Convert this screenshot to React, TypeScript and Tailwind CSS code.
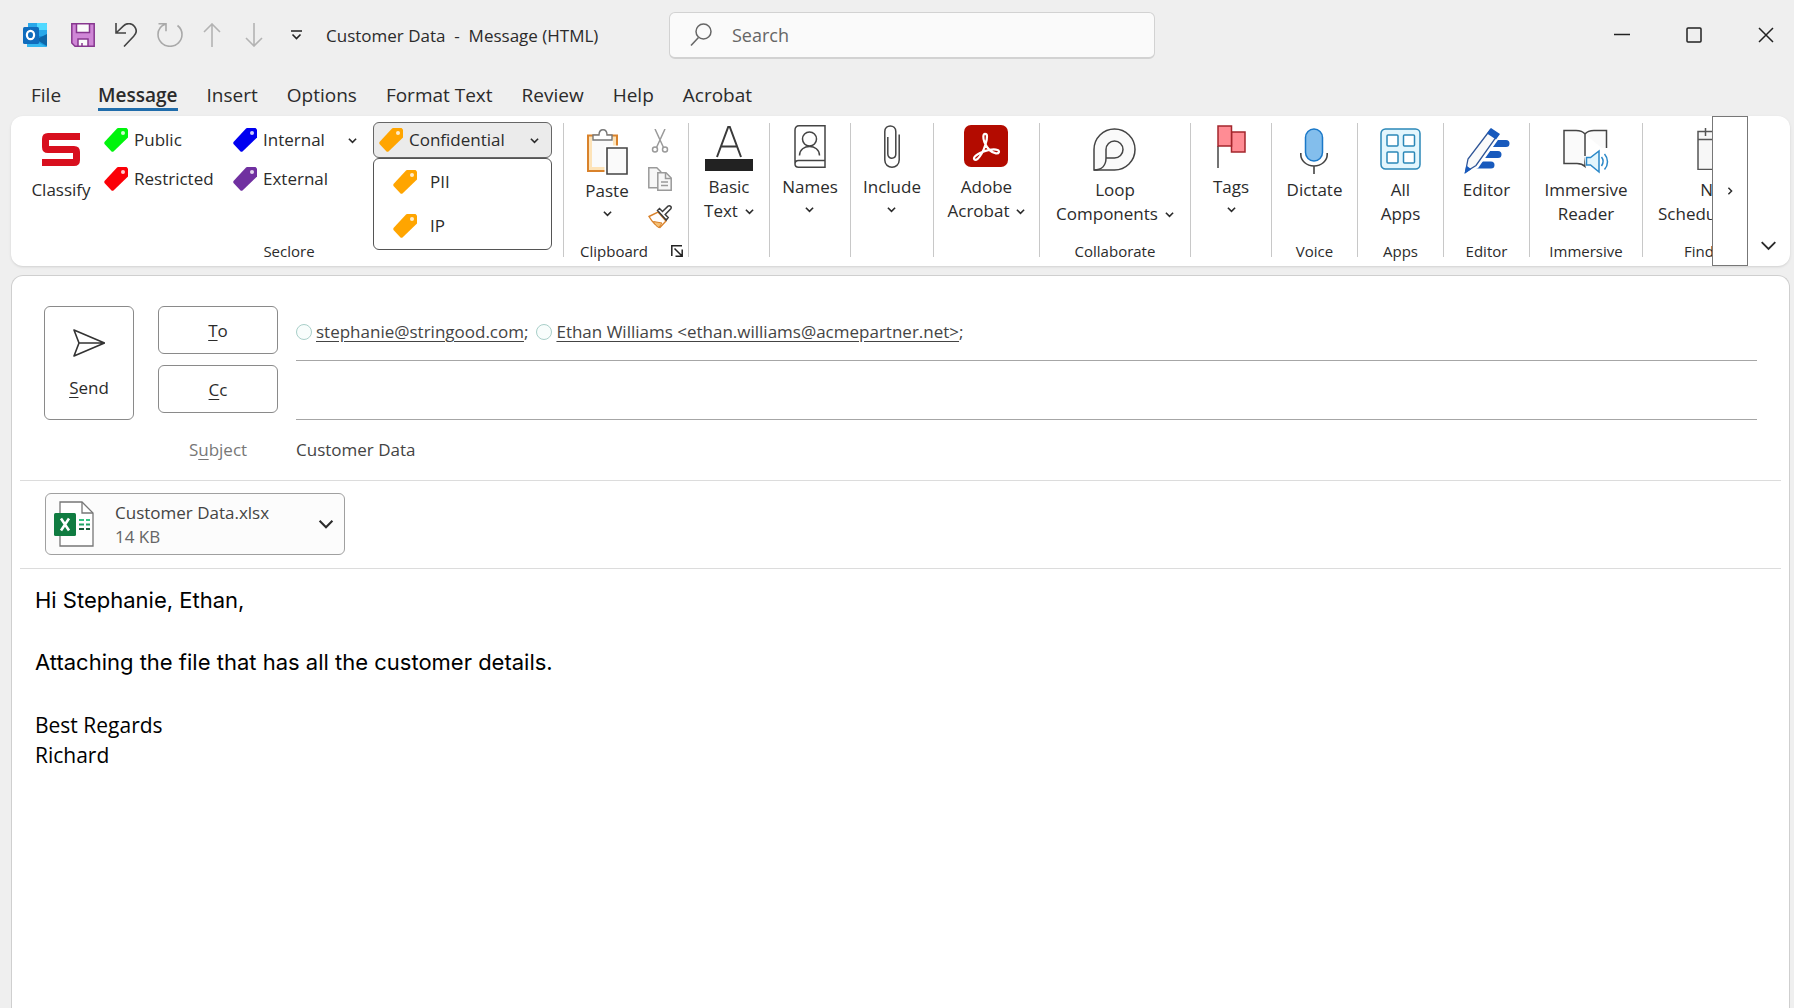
import type { ReactNode } from 'react';

interface TagButtonProps {
  color: string;
  label: string;
}

function Chevron({ className = 'w-[9px] h-[9px]', weight = 1.8 }: { className?: string; weight?: number }) {
  return (
    <svg className={`${className} shrink-0`} viewBox="0 0 10 10" fill="none" stroke="currentColor" strokeWidth={weight}>
      <path d="M1 3l4 4 4-4" />
    </svg>
  );
}

function TagIcon({ color }: { color: string }) {
  return (
    <svg className="w-6 h-6 shrink-0" viewBox="0 0 24 24">
      <path d="M14 0h8.5L24 1.5V9.500L9.500 23.500Q8.500 24 7.500 23.500L.5 16Q0 15 .5 14L13 .6z" fill={color} />
      <circle cx="19" cy="5" r="2" fill="#fff" fillOpacity=".8" />
    </svg>
  );
}

function TagButton({ color, label }: TagButtonProps) {
  return (
    <button className="flex h-6 items-center gap-[6px]">
      <TagIcon color={color} />
      {label}
    </button>
  );
}

function Divider() {
  return <div className="h-[134px] w-px shrink-0 bg-[#c8c8c8]" />;
}

interface GroupProps {
  width: string;
  label?: string;
  children: ReactNode;
}

function Group({ width, label, children }: GroupProps) {
  return (
    <div className={`${width} flex h-[138px] shrink-0 flex-col items-center justify-between`}>
      {children}
      {label && <div className="h-5 text-[15px] leading-5 whitespace-nowrap">{label}</div>}
    </div>
  );
}

interface BigButtonProps {
  icon: ReactNode;
  lines: string[];
  menu?: 'inline' | 'below';
  tall?: boolean;
}

function BigButton({ icon, lines, menu, tall }: BigButtonProps) {
  return (
    <button className="flex flex-col items-center leading-6">
      <span className={`flex items-start ${tall ? 'h-[55px] pt-[5px]' : 'h-[52px] pt-[2px]'}`}>{icon}</span>
      {lines.map((line, i) => (
        <span key={line} className="flex items-center gap-[7px] whitespace-nowrap">
          {line}
          {menu === 'inline' && i === lines.length - 1 && <Chevron />}
        </span>
      ))}
      {menu === 'below' && (
        <span className="flex h-5 items-center">
          <Chevron />
        </span>
      )}
    </button>
  );
}

function OutlookIcon() {
  return (
    <svg className="w-6 h-6" viewBox="0 0 24 24">
      <rect x="5" y="0" width="19" height="20" rx="1" fill="#1490df" />
      <path d="M14 0h9a1 1 0 0 1 1 1v6H14z" fill="#50d9ff" />
      <path d="M5 1a1 1 0 0 1 1-1h8v7H5z" fill="#28a8ea" />
      <path d="M14 7h10v6H14z" fill="#28a8ea" />
      <path d="M4 12l10 5 10-6v12a1 1 0 0 1-1 1H5a1 1 0 0 1-1-1z" fill="#1a9be0" />
      <path d="M24 11v12L13 16.500z" fill="#0a4f8f" fillOpacity=".7" />
      <path d="M4 14l20 10H5a1 1 0 0 1-1-1z" fill="#35b8f1" />
      <rect x="0" y="4" width="16" height="17" rx="1.500" fill="#0f6cbd" />
      <ellipse cx="7.500" cy="12" rx="3.600" ry="4.200" fill="none" stroke="#fff" strokeWidth="2.200" />
    </svg>
  );
}

function SaveIcon() {
  return (
    <svg className="w-6 h-6" viewBox="0 0 24 24" stroke="#87378f" strokeWidth="1.500">
      <path d="M.8.8h22.400v22.400H4L.8 20z" fill="#cf86d6" />
      <path d="M5.500.8h13v8.700h-13z" fill="#fafafa" />
      <path d="M7 23.200v-7.200h10v7.200z" fill="#fafafa" />
      <path d="M11 20v3" />
    </svg>
  );
}

function UndoIcon() {
  return (
    <svg className="w-[22px] h-6" viewBox="0 0 22 24" fill="none" stroke="#444" strokeWidth="1.600">
      <path d="M1 0v10h10M1 10L8.500 2.800c3.600-3.400 8.600-2.600 11 .6s2 7-.8 9.800L9 23.500" />
    </svg>
  );
}

function RedoIcon() {
  return (
    <svg className="w-[26px] h-6" viewBox="0 0 26 24" fill="none" stroke="#a9a9a9" strokeWidth="1.600">
      <path d="M1.500.8h7.500v7.500M8.800 1C4 2.600 1 6.700 1 11.500a12 11.800 0 0 0 24 0C25 8 23.200 4.600 20.500 2.500" />
    </svg>
  );
}

function ArrowIcon({ down }: { down?: boolean }) {
  return (
    <svg className={`w-[18px] h-6 ${down ? 'rotate-180' : ''}`} viewBox="0 0 18 24" fill="none" stroke="#b3b3b3" strokeWidth="1.600">
      <path d="M9 24V1M1 9l8-8 8 8" />
    </svg>
  );
}

function PasteIcon() {
  return (
    <svg className="w-[42px] h-[46px]" viewBox="0 0 42 46">
      <path d="M2 6.500h29V42H2z" fill="#fde3b8" stroke="#d9822b" strokeWidth="2" />
      <path d="M6 10h21v28H6z" fill="#fafafa" />
      <path d="M7 11V6h6c0-7 8-7 8 0h5v5z" fill="#fff" stroke="#777" strokeWidth="1.400" />
      <path d="M18.500 16.500h24V46h-24z" fill="#fff" />
      <path d="M21 19h20v26H21z" fill="#fafafa" stroke="#444" strokeWidth="1.600" />
    </svg>
  );
}

function CutIcon() {
  return (
    <svg className="w-[18px] h-6" viewBox="0 0 18 24" fill="none" stroke="#9a9a9a" strokeWidth="1.500">
      <path d="M4 0l8.500 18.500M14 0L5.500 18.500" />
      <circle cx="4" cy="20.500" r="2.500" />
      <circle cx="14" cy="20.500" r="2.500" />
    </svg>
  );
}

function CopyIcon() {
  return (
    <svg className="w-6 h-6" viewBox="0 0 24 24" fill="#f7f7f7" stroke="#9a9a9a" strokeWidth="1.500">
      <path d="M.8.8h8l4 4v16H.8z" />
      <path d="M9.800 5.800H18l5.200 5.200v12.200H9.800z" />
      <path d="M17.500 6v5.500H23M13 15h7M13 18.500h7" fill="none" />
    </svg>
  );
}

function FormatPainterIcon() {
  return (
    <svg className="w-6 h-6" viewBox="0 0 24 24">
      <path d="M1 11.500l9-4.500 8 9-6 6.500C8 21 4 16.500 1 11.500z" fill="#fff" stroke="#d9822b" strokeWidth="1.400" />
      <path d="M5.500 16.500l8.500 1.500-3 4.500c-2.500-1-4.500-3.500-5.500-6z" fill="#f5bf73" stroke="#d9822b" />
      <path d="M9.500 5.500l2-2 3 3L20 1.200c2-1.200 4 .8 2.800 2.600L17.200 9.500l3 3-2 2.500z" fill="#fff" stroke="#3c3c3c" strokeWidth="1.500" />
    </svg>
  );
}

function LauncherIcon() {
  return (
    <svg className="w-3 h-3" viewBox="0 0 12 12" fill="none" stroke="#222" strokeWidth="1.500">
      <path d="M.8 11V.8H11M3.500 3.500l7 7M11.200 4.500v6.700H4.500" />
    </svg>
  );
}

function BasicTextIcon() {
  return (
    <svg className="w-12 h-[46px]" viewBox="0 0 48 46">
      <path d="M12 32L23.200 2h1.600L36 32M16 21.500h16" fill="none" stroke="#3a3a3a" strokeWidth="2" />
      <path d="M0 34h48v12H0z" fill="#222" />
    </svg>
  );
}

function NamesIcon() {
  return (
    <svg className="w-8 h-[43px]" viewBox="0 0 32 43" fill="none" stroke="#444" strokeWidth="1.500">
      <path d="M31 .8v41.400H4.500C2.500 42.200 1 41 1 39V5C1 2.500 2.500.8 5 .8zM31 35.500H4.500C2.500 35.500 1 37 1 39" />
      <circle cx="15.500" cy="14" r="7" />
      <path d="M5.500 30.500c0-12 20-12 20 0" />
    </svg>
  );
}

function ClipIcon() {
  return (
    <svg className="w-4 h-[43px]" viewBox="0 0 16 43" fill="none" stroke="#444" strokeWidth="1.500">
      <path d="M15.200 9.500V35c0 9.600-14.400 9.600-14.400 0V6.500C.8-1 11.800-1 11.800 6.500V29c0 5.500-8 5.500-8 0V12" />
    </svg>
  );
}

function AdobeIcon() {
  return (
    <svg className="w-11 h-[42px]" viewBox="0 0 44 42">
      <rect width="44" height="42" rx="7" fill="#b30b00" />
      <path
        d="M21 8.800c-2 0-2.200 4-.6 8.200 2.600 6.500 7.200 10.500 11.500 11.300 3.200.5 4.200-2.300 1.600-3.300-4-1.600-12.500.3-18.500 3.500-4 2-5.800 4.600-4.600 5.900 1.600 1.600 4.600-1.200 7.300-5.900 3-5.200 5.500-13.500 5.300-17.500-.1-1.600-1-2.200-2-2.200z"
        fill="none"
        stroke="#fff"
        strokeWidth="2.200"
      />
    </svg>
  );
}

function LoopIcon() {
  return (
    <svg className="w-[43px] h-[43px]" viewBox="0 0 43 43" fill="none" stroke="#444" strokeWidth="1.500">
      <path d="M1 42V21.500A20.500 20.500 0 1 1 21.500 42z" fill="#fafafa" />
      <path d="M1 42c8 0 12-5 12-12v-8.500a8.500 8.500 0 1 1 8.500 8.500H13" />
    </svg>
  );
}

function FlagIcon() {
  return (
    <svg className="w-[30px] h-[43px]" viewBox="0 0 30 43">
      <path d="M2 21v22" stroke="#444" strokeWidth="1.500" />
      <path d="M15.500 7H29v20H15.500z" fill="#ff8c94" stroke="#a4262c" strokeWidth="1.500" />
      <path d="M2 1h13.500v20H2z" fill="#ff8c94" stroke="#a4262c" strokeWidth="1.500" />
    </svg>
  );
}

function MicIcon() {
  return (
    <svg className="w-7 h-[46px]" viewBox="0 0 28 46" fill="none">
      <path d="M.8 25v1.500c0 6 5.500 11.500 13.200 11.500s13.200-5.500 13.200-11.500V25M14 38v8" stroke="#444" strokeWidth="1.600" />
      <rect x="5.500" y="1" width="17" height="32" rx="8.500" fill="#83beec" stroke="#1a78c8" strokeWidth="1.500" />
    </svg>
  );
}

function AppsIcon() {
  return (
    <svg className="w-[41px] h-[42px]" viewBox="0 0 41 42" fill="#fff" stroke="#2b88b8" strokeWidth="1.500">
      <rect x="1" y="1" width="39" height="40" rx="4.500" fill="#e3f6fd" />
      <rect x="7" y="7" width="11" height="11" rx="1" />
      <rect x="23.500" y="7" width="11" height="11" rx="1" />
      <rect x="7" y="24" width="11" height="11" rx="1" />
      <rect x="23.500" y="24" width="11" height="11" rx="1" />
    </svg>
  );
}

function EditorIcon() {
  return (
    <svg className="w-[46px] h-[46px]" viewBox="0 0 46 46">
      <path d="M24 15.500h18M18 26.500h16M14 37h13" stroke="#185abd" strokeWidth="7" strokeLinecap="round" />
      <path d="M1 43l3-13L27 2l8 5.500-22 31z" fill="#fff" stroke="#fff" strokeWidth="3.500" />
      <path d="M1.500 44l2.500-13L26.500 1.500l7.500 5L12 37.500z" fill="#fafafa" stroke="#2f5597" strokeWidth="1.300" />
      <path d="M27 0l9 6-4 5.500-9-6zM.5 46l1.800-8.500 5 3.700z" fill="#185abd" />
    </svg>
  );
}

function ReaderIcon() {
  return (
    <svg className="w-[47px] h-[46px]" viewBox="0 0 47 46" fill="none" strokeWidth="1.500">
      <path d="M22 6C20 3.500 17 2.500 13 2.500H1V35.500h13c4 0 6 1 8 3V6c2-2.500 5-3.500 9-3.500h12.500V24" stroke="#444" fill="#fafafa" />
      <path d="M21 28h9l6-8h11v26H24z" fill="#fff" />
      <path d="M23.500 29.500h4L36 23v21l-8.500-7h-4z" stroke="#2b88c8" fill="#e3f6fd" />
      <path d="M38.500 29c2 2.500 2 6 0 9M41.500 26c4 4.500 4 11 0 15.500" stroke="#2b88c8" />
    </svg>
  );
}

function CalendarIcon() {
  return (
    <svg className="w-[42px] h-[42px]" viewBox="0 0 42 42" fill="none" stroke="#555" strokeWidth="1.500">
      <path d="M1 3.500h40v38H1z" fill="#f7f7f7" />
      <path d="M1 11.500h40M8.500 0v8M33.500 0v8" />
    </svg>
  );
}

function SendIcon() {
  return (
    <svg className="w-8 h-7" viewBox="0 0 32 28" fill="none" stroke="#333" strokeWidth="1.600" strokeLinejoin="round">
      <path d="M1 1l30.500 13L1 27l5-13zM6 14h25" />
    </svg>
  );
}

function ExcelFileIcon() {
  return (
    <svg className="w-10 h-[46px]" viewBox="0 0 40 46">
      <path d="M6 1h22l11 11v33H6z" fill="#fff" stroke="#777" strokeWidth="1.300" />
      <path d="M28 1v11h11" fill="none" stroke="#777" strokeWidth="1.300" />
      <path d="M25 19h5M32 19h4" stroke="#33c481" strokeWidth="2" />
      <path d="M25 23.500h5M32 23.500h4" stroke="#21a366" strokeWidth="2" />
      <path d="M25 28h5M32 28h4" stroke="#185c37" strokeWidth="2" />
      <rect y="12" width="22" height="23" rx="1.500" fill="#107c41" />
      <path d="M7 17.500l8 12M15 17.500l-8 12" stroke="#fff" strokeWidth="2.600" />
    </svg>
  );
}

function TitleBar() {
  return (
    <header className="flex h-[70px] items-center">
      <div className="flex w-[669px] shrink-0 items-center pl-[23px]">
        <OutlookIcon />
        <div className="ml-6 flex items-center gap-5">
          <button aria-label="Save"><SaveIcon /></button>
          <button aria-label="Undo"><UndoIcon /></button>
          <button aria-label="Redo"><RedoIcon /></button>
          <button aria-label="Previous item"><ArrowIcon /></button>
          <button className="ml-1" aria-label="Next item"><ArrowIcon down /></button>
        </div>
        <button className="ml-7" aria-label="Customize toolbar">
          <svg className="w-[11px] h-[10px]" viewBox="0 0 11 10" fill="none" stroke="#222" strokeWidth="1.600">
            <path d="M0 1h11M1.500 4.500l4 4 4-4" />
          </svg>
        </button>
        <h1 className="ml-6 whitespace-pre pt-px text-[17px]">Customer Data  -  Message (HTML)</h1>
      </div>
      <label className="flex h-[47px] max-w-[486px] flex-1 items-center rounded-md border border-b-2 border-[#d2d2d2] bg-[#fafafa] pl-5">
        <svg className="w-[22px] h-6 text-[#666]" viewBox="0 0 22 24" fill="none" stroke="currentColor" strokeWidth="1.500">
          <circle cx="13.500" cy="8.500" r="7.500" />
          <path d="M8.500 14.500L1 22.500" />
        </svg>
        <input
          type="text"
          aria-label="Search"
          placeholder="Search"
          className="ml-5 min-w-0 flex-1 bg-transparent pt-px text-[18px] outline-none placeholder:text-[#666]"
        />
      </label>
      <div className="ml-auto flex items-center gap-14 pr-5">
        <button aria-label="Minimize">
          <svg className="w-4 h-4" viewBox="0 0 16 16" fill="none" stroke="#222" strokeWidth="1.500"><path d="M0 7.500h16" /></svg>
        </button>
        <button aria-label="Maximize">
          <svg className="w-4 h-4" viewBox="0 0 16 16" fill="none" stroke="#222" strokeWidth="1.500"><rect x="1" y="1" width="14" height="14" rx="1" /></svg>
        </button>
        <button aria-label="Close">
          <svg className="w-4 h-4" viewBox="0 0 16 16" fill="none" stroke="#222" strokeWidth="1.500"><path d="M1 1l14 14M15 1L1 15" /></svg>
        </button>
      </div>
    </header>
  );
}

const TABS = ['Insert', 'Options', 'Format Text', 'Review', 'Help', 'Acrobat'];

function RibbonTabs() {
  return (
    <nav className="flex h-[46px] items-start gap-[29px] pt-[11px] pl-[31px] text-[19px] leading-7">
      <button>File</button>
      <button className="ml-2 h-[30px] border-b-3 border-[#1f6cab] font-semibold">Message</button>
      {TABS.map((tab) => (
        <button key={tab}>{tab}</button>
      ))}
    </nav>
  );
}

function SecloreGroup() {
  return (
    <div className="flex h-[138px] w-[552px] shrink-0 flex-col justify-between">
      <div className="flex">
        <button className="ml-5 flex w-[60px] flex-col items-center pt-[10px]">
          <svg className="h-[33px] w-[38px]" viewBox="0 0 38 33">
            <path d="M38 3.500H6Q3.500 3.500 3.500 6v8q0 2.500 2.500 2.500h26q2.500 0 2.500 2.500v8q0 2.500-2.500 2.500H0" fill="none" stroke="#d80f1e" strokeWidth="7" />
          </svg>
          <span className="mt-3 leading-6">Classify</span>
        </button>
        <div className="ml-[13px] flex w-[129px] flex-col gap-[15px] pt-[5px]">
          <TagButton color="#00f40c" label="Public" />
          <TagButton color="#fb0007" label="Restricted" />
        </div>
        <div className="flex w-[140px] flex-col gap-[15px] pt-[5px]">
          <div className="flex items-center justify-between pr-4">
            <TagButton color="#0000f0" label="Internal" />
            <button aria-label="Internal options"><Chevron /></button>
          </div>
          <TagButton color="#7030a0" label="External" />
        </div>
        <div className="relative w-[179px]">
          <button className="-mt-px flex h-9 w-full items-center gap-[6px] rounded-md border border-[#666] bg-[#ebebeb] pr-3 pl-[5px]">
            <TagIcon color="#ffa500" />
            Confidential
            <span className="ml-auto"><Chevron /></span>
          </button>
          <div className="absolute top-[35px] left-0 flex h-[92px] w-full flex-col gap-5 rounded-md border border-[#555] bg-white pt-[11px] pl-[19px]">
            <button className="flex h-6 items-center gap-[13px]"><TagIcon color="#ffa500" />PII</button>
            <button className="flex h-6 items-center gap-[13px]"><TagIcon color="#ffa500" />IP</button>
          </div>
        </div>
      </div>
      <div className="h-5 pl-1 text-center text-[15px] leading-5">Seclore</div>
    </div>
  );
}

function ClipboardGroup() {
  return (
    <div className="flex h-[138px] w-[124px] shrink-0 flex-col justify-between">
      <div className="flex pl-[22px]">
        <button className="flex w-[42px] flex-col items-center">
          <span className="pt-[6px]"><PasteIcon /></span>
          <span className="mt-1 leading-6">Paste</span>
          <span className="flex h-5 items-center"><Chevron /></span>
        </button>
        <div className="ml-5 flex flex-col items-center gap-[14px] pt-[6px]">
          <button aria-label="Cut"><CutIcon /></button>
          <button aria-label="Copy"><CopyIcon /></button>
          <button aria-label="Format painter"><FormatPainterIcon /></button>
        </div>
      </div>
      <div className="flex h-5 items-center justify-between pr-[5px] pl-4 text-[15px] leading-5">
        Clipboard
        <button aria-label="Clipboard settings"><LauncherIcon /></button>
      </div>
    </div>
  );
}

function Ribbon() {
  return (
    <section className="mr-1 ml-[11px] flex h-[150px] rounded-xl bg-white shadow-sm">
      <div className="flex min-w-0 flex-1 overflow-hidden pt-[7px]">
        <SecloreGroup />
        <Divider />
        <ClipboardGroup />
        <Divider />
        <Group width="w-[80px]"><BigButton icon={<BasicTextIcon />} lines={['Basic', 'Text']} menu="inline" /></Group>
        <Divider />
        <Group width="w-[80px]"><BigButton icon={<NamesIcon />} lines={['Names']} menu="below" /></Group>
        <Divider />
        <Group width="w-[82px]"><BigButton icon={<ClipIcon />} lines={['Include']} menu="below" /></Group>
        <Divider />
        <Group width="w-[105px]"><BigButton icon={<AdobeIcon />} lines={['Adobe', 'Acrobat']} menu="inline" /></Group>
        <Divider />
        <Group width="w-[150px]" label="Collaborate">
          <BigButton icon={<LoopIcon />} lines={['Loop', 'Components']} menu="inline" tall />
        </Group>
        <Divider />
        <Group width="w-[80px]"><BigButton icon={<FlagIcon />} lines={['Tags']} menu="below" /></Group>
        <Divider />
        <Group width="w-[85px]" label="Voice"><BigButton icon={<MicIcon />} lines={['Dictate']} tall /></Group>
        <Divider />
        <Group width="w-[85px]" label="Apps"><BigButton icon={<AppsIcon />} lines={['All', 'Apps']} tall /></Group>
        <Divider />
        <Group width="w-[85px]" label="Editor"><BigButton icon={<EditorIcon />} lines={['Editor']} tall /></Group>
        <Divider />
        <Group width="w-[112px]" label="Immersive"><BigButton icon={<ReaderIcon />} lines={['Immersive', 'Reader']} tall /></Group>
        <Divider />
        <Group width="w-[150px]" label="Find Time">
          <BigButton icon={<CalendarIcon />} lines={['New', 'Scheduling Poll']} tall />
        </Group>
      </div>
      <button className="flex w-9 shrink-0 items-center justify-center border border-[#777]" aria-label="Scroll ribbon">
        <Chevron className="w-2 h-2 -rotate-90" />
      </button>
      <button className="mr-[13px] mb-3 ml-3 self-end" aria-label="Collapse ribbon">
        <Chevron className="w-[17px] h-[17px]" weight={1.1} />
      </button>
    </section>
  );
}

interface RecipientProps {
  name: string;
  email: string;
}

function Recipient({ name, email }: RecipientProps) {
  return (
    <span className="flex items-center">
      <span className="mr-1 h-4 w-4 rounded-full border border-[#a9cfc9] bg-[#f8fdfc]" />
      <a href={`mailto:${email}`} className="underline underline-offset-3">{name}</a>;
    </span>
  );
}

function Compose() {
  return (
    <main className="mt-[9px] mr-1 ml-[11px] flex flex-1 flex-col rounded-t-xl border border-b-0 border-[#cfcfcf] bg-white">
      <div className="mr-2 ml-2 flex border-b border-[#dcdcdc] pt-[30px] pr-6 pl-6">
        <button className="flex h-[114px] w-[90px] flex-col items-center rounded-md border border-[#8a8a8a] pt-[22px]">
          <SendIcon />
          <span className="mt-[19px] leading-6"><u className="underline-offset-3">S</u>end</span>
        </button>
        <div className="ml-6 flex w-[120px] flex-col">
          <button className="h-12 rounded-md border border-[#8a8a8a] pt-px"><u className="underline-offset-3">T</u>o</button>
          <button className="mt-[11px] h-12 rounded-md border border-[#8a8a8a] pt-px"><u className="underline-offset-3">C</u>c</button>
          <label htmlFor="subject" className="flex h-[60px] items-center justify-center pt-[14px] text-[#777]">
            <span>S<u className="underline-offset-3">u</u>bject</span>
          </label>
        </div>
        <div className="ml-[18px] flex min-w-0 flex-1 flex-col text-[#444]">
          <div className="flex h-[55px] items-center gap-2 border-b border-[#a6a6a6] pb-[2px]">
            <Recipient name="stephanie@stringood.com" email="stephanie@stringood.com" />
            <Recipient name="Ethan Williams <ethan.williams@acmepartner.net>" email="ethan.williams@acmepartner.net" />
          </div>
          <input type="text" aria-label="Cc" className="h-[59px] border-b border-[#a6a6a6] outline-none" />
          <input id="subject" type="text" defaultValue="Customer Data" className="h-[60px] pb-[2px] outline-none" />
        </div>
      </div>
      <div className="mr-2 ml-2 border-b border-[#dcdcdc] pt-3 pb-[13px] pl-[25px]">
        <button className="flex h-[62px] w-[300px] items-center rounded-md border border-[#a0a0a0] bg-[#fcfcfc] pr-[10px] pl-2 text-left">
          <ExcelFileIcon />
          <span className="ml-[21px] pt-px leading-6">
            <span className="block text-[#444]">Customer Data.xlsx</span>
            <span className="block text-[#666]">14 KB</span>
          </span>
          <span className="ml-auto"><Chevron className="w-4 h-4" weight={1.3} /></span>
        </button>
      </div>
      <article className="pt-4 pl-[23px] text-black">
        <p className="font-['Inter'] text-[22px] leading-[31px]">Hi Stephanie, Ethan,</p>
        <p className="mt-[31px] font-['Inter'] text-[22px] leading-[31px]">Attaching the file that has all the customer details.</p>
        <p className="mt-8 text-[21px] leading-[30px]">Best Regards</p>
        <p className="text-[21px] leading-[30px]">Richard</p>
      </article>
    </main>
  );
}

export default function App() {
  return (
    <div className="flex min-h-screen flex-col bg-[#efefef] font-['Open_Sans',sans-serif] text-[17px] text-[#2b2b2b]">
      <TitleBar />
      <RibbonTabs />
      <Ribbon />
      <Compose />
    </div>
  );
}
